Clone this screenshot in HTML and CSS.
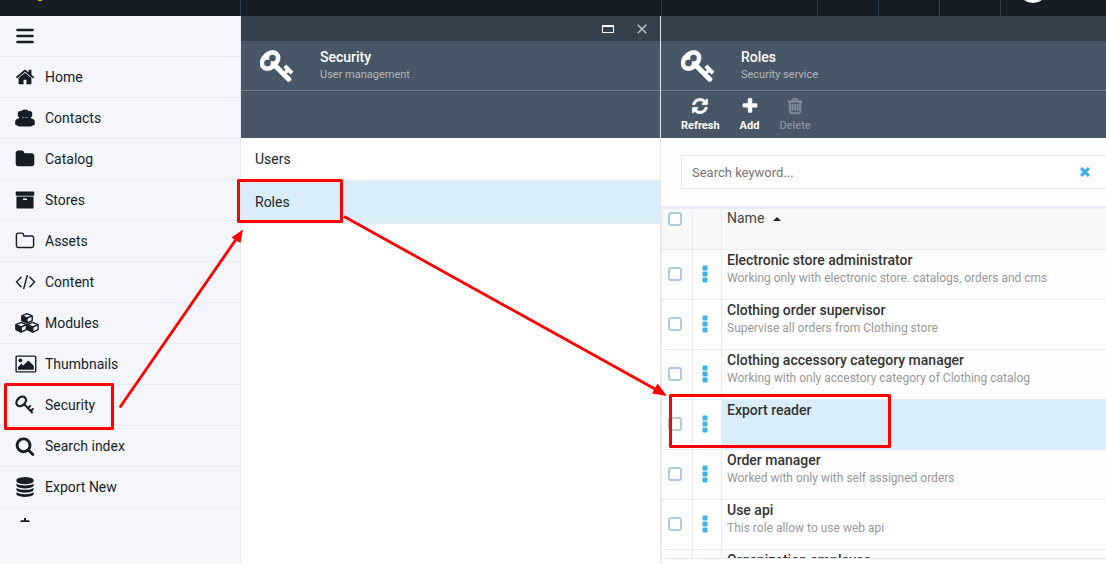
FILE: index.html
```html
<!DOCTYPE html>
<html lang="en">
<head>
<meta charset="utf-8">
<title>Security roles</title>
<link rel="stylesheet" href="styles.css">
</head>
<body>
<svg class="sprite" aria-hidden="true">
  <symbol id="i-home" viewBox="0 0 1792 1792"><path d="M1472 992v480q0 26-19 45t-45 19h-384v-384h-256v384h-384q-26 0-45-19t-19-45v-480q0-1 .5-3t.5-3l575-474 575 474q1 2 1 6zm223-69l-62 74q-8 9-21 11h-3q-13 0-21-7l-692-577-692 577q-12 8-24 7-13-2-21-11l-62-74q-8-10-7-23.5t11-21.5l719-599q32-26 76-26t76 26l244 204v-195q0-14 9-23t23-9h192q14 0 23 9t9 23v408l219 182q10 8 11 21.5t-7 23.5z"/></symbol>
  <symbol id="i-group" viewBox="0 0 20 20"><path d="M10 1.5C12.2 1.5 13.3 2.6 14 3.2C16 2.6 17.6 4.2 17.2 6.2C17.6 7.4 16.8 8.6 15.9 9.4V10.2C18 10.6 19.8 11.5 19.8 14V16C19.8 17.2 18.8 17.4 17.6 17.4C17 18.2 15.8 18.4 14.8 18.4H5.2C4.2 18.4 3 18.2 2.4 17.4C1.2 17.4.2 17.2.2 16V14C.2 11.5 2 10.6 4.1 10.2V9.4C3.2 8.6 2.4 7.4 2.8 6.2C2.4 4.2 4 2.6 6 3.2C6.7 2.6 7.8 1.5 10 1.5Z"/><path d="M7 9.5h6" fill="none" stroke="#8d9299" stroke-width=".8" stroke-dasharray="2.4 .8"/></symbol>
  <symbol id="i-folder" viewBox="0 0 1792 1792"><path d="M1728 608v704q0 92-66 158t-158 66h-1216q-92 0-158-66t-66-158v-960q0-92 66-158t158-66h320q92 0 158 66t66 158v32h672q92 0 158 66t66 158z"/></symbol>
  <symbol id="i-archive" viewBox="0 0 1792 1792"><path d="M1088 832q0-26-19-45t-45-19h-256q-26 0-45 19t-19 45 19 45 45 19h256q26 0 45-19t19-45zm576-192v960q0 26-19 45t-45 19h-1408q-26 0-45-19t-19-45v-960q0-26 19-45t45-19h1408q26 0 45 19t19 45zm64-448v256q0 26-19 45t-45 19h-1536q-26 0-45-19t-19-45v-256q0-26 19-45t45-19h1536q26 0 45 19t19 45z"/></symbol>
  <symbol id="i-folder-o" viewBox="0 0 1792 1792"><path d="M1600 1312v-704q0-40-28-68t-68-28h-704q-40 0-68-28t-28-68v-64q0-40-28-68t-68-28h-320q-40 0-68 28t-28 68v960q0 40 28 68t68 28h1216q40 0 68-28t28-68zm128-704v704q0 92-66 158t-158 66h-1216q-92 0-158-66t-66-158v-960q0-92 66-158t158-66h320q92 0 158 66t66 158v32h672q92 0 158 66t66 158z"/></symbol>
  <symbol id="i-code" viewBox="0 0 22 20"><path d="M6.5 4.8 1.5 10l5 5.2M14.5 4.8l5 5.2-5 5.2M12.4 3 8.6 17" fill="none" stroke="currentColor" stroke-width="1.4"/></symbol>
  <symbol id="i-cubes" viewBox="0 0 24 22"><g stroke="currentColor" stroke-width="1.4" stroke-linejoin="round" fill="#f4f6fb"><path d="M12 1.7 17.2 3.8V8.6L12 11 6.8 8.6V3.8Z"/><path d="M6.2 10.4 11.4 12.6V17.6L6.2 20.2.9 17.6V12.6Z"/><path d="M17.8 10.4 23.1 12.6V17.6L17.8 20.2 12.4 17.6V12.6Z"/><path d="M6.8 3.8 12 6 17.2 3.8M.9 12.6 6.2 15 11.4 12.6M12.4 12.6 17.8 15 23.1 12.6M12 6V11M6.2 15V20M17.8 15V20" fill="none"/></g><path d="M6.8 3.8 12 6V11L6.8 8.6ZM.9 12.6 6.2 15V20.2L.9 17.6ZM12.4 12.6 17.8 15V20.2L12.4 17.6Z"/></symbol>
  <symbol id="i-image" viewBox="0 0 22 20"><rect x="1.1" y="2.1" width="19.6" height="15.8" rx="1" fill="none" stroke="currentColor" stroke-width="1.4"/><circle cx="5.4" cy="6.4" r="1.9"/><path d="M3 15.8V13L6.3 9.8 8.2 11.6 13.3 6.4 18.8 11.8V15.8Z"/></symbol>
  <symbol id="i-key" viewBox="0 0 1792 1792"><path d="M832 512q0-80-56-136t-136-56-136 56-56 136q0 42 19 83-41-19-83-19-80 0-136 56t-56 136 56 136 136 56 136-56 56-136q0-42-19-83 41 19 83 19 80 0 136-56t56-136zm851 704q0 17-49 66t-66 49q-9 0-28.500-16t-36.500-33-38.500-40-24.500-26l-96 96 220 220q28 28 28 68 0 42-39 81t-81 39q-40 0-68-28l-671-671q-176 131-365 131-163 0-265.500-102.500t-102.500-265.500q0-160 95-313t248-248 313-95q163 0 265.500 102.500t102.500 265.500q0 189-131 365l355 355 96-96q-3-3-26-24.500t-40-38.500-33-36.500-16-28.500q0-17 49-66t66-49q13 0 23 10 6 6 46 44.500t82 79.500 86.500 86 73 78 28.500 41z" stroke="currentColor" stroke-width="40"/></symbol>
  <symbol id="i-key-thin" viewBox="0 0 20 20"><g fill="none" stroke="currentColor" stroke-width="2.300"><ellipse cx="6.200" cy="6.400" rx="5.400" ry="4" transform="rotate(-45 6.200 6.400)"/><path d="M9.200 9.200 17.600 18M12.800 13.400 15.800 10.400M15.600 16.200 18.400 13.400" stroke-width="2"/></g></symbol>
  <symbol id="i-search" viewBox="0 0 1792 1792"><path d="M1216 832q0-185-131.500-316.500t-316.500-131.500-316.500 131.500-131.500 316.500 131.500 316.500 316.500 131.500 316.500-131.500 131.500-316.500zm512 832q0 52-38 90t-90 38q-54 0-90-38l-343-342q-179 124-399 124-143 0-273.500-55.500t-225-150-150-225-55.500-273.500 55.500-273.500 150-225 225-150 273.500-55.500 273.500 55.500 225 150 150 225 55.500 273.500q0 220-124 399l343 343q37 37 37 90z"/></symbol>
  <symbol id="i-db" viewBox="0 0 1792 1792"><path d="M896 768q237 0 443-43t325-127v170q0 69-103 128t-280 93.500-385 34.500-385-34.500-280-93.500-103-128v-170q119 84 325 127t443 43zm0 768q237 0 443-43t325-127v170q0 69-103 128t-280 93.500-385 34.500-385-34.500-280-93.500-103-128v-170q119 84 325 127t443 43zm0-384q237 0 443-43t325-127v170q0 69-103 128t-280 93.500-385 34.500-385-34.500-280-93.500-103-128v-170q119 84 325 127t443 43zm0-1152q208 0 385 34.500t280 93.500 103 128v128q0 69-103 128t-280 93.500-385 34.500-385-34.500-280-93.500-103-128v-128q0-69 103-128t280-93.500 385-34.500z"/></symbol>
  <symbol id="i-more" viewBox="0 0 20 20"><path d="M9 0H11V2.200H14L15 4H5L6 2.200H9Z"/></symbol>
  <symbol id="i-refresh" viewBox="0 0 1792 1792"><path d="M1639 1056q0 5-1 7-64 268-268 434.500t-478 166.500q-146 0-282.500-55t-243.500-157l-129 129q-19 19-45 19t-45-19-19-45v-448q0-26 19-45t45-19h448q26 0 45 19t19 45-19 45l-137 137q71 66 161 102t187 36q134 0 250-65t186-179q11-17 53-117 8-23 30-23h192q13 0 22.500 9.500t9.500 22.500zm25-800v448q0 26-19 45t-45 19h-448q-26 0-45-19t-19-45 19-45l138-138q-148-137-349-137-134 0-250 65t-186 179q-11 17-53 117-8 23-30 23h-199q-13 0-22.500-9.500t-9.500-22.500v-7q65-268 270-434.500t480-166.500q146 0 284 55.500t245 156.500l130-129q19-19 45-19t45 19 19 45z" stroke="currentColor" stroke-width="50"/></symbol>
  <symbol id="i-plus" viewBox="0 0 1792 1792"><path d="M1600 736v192q0 40-28 68t-68 28h-416v416q0 40-28 68t-68 28h-192q-40 0-68-28t-28-68v-416h-416q-40 0-68-28t-28-68v-192q0-40 28-68t68-28h416v-416q0-40 28-68t68-28h192q40 0 68 28t28 68v416h416q40 0 68 28t28 68z" stroke="currentColor" stroke-width="50"/></symbol>
  <symbol id="i-trash" viewBox="0 0 1792 1792"><path d="M704 736v576q0 14-9 23t-23 9h-64q-14 0-23-9t-9-23v-576q0-14 9-23t23-9h64q14 0 23 9t9 23zm256 0v576q0 14-9 23t-23 9h-64q-14 0-23-9t-9-23v-576q0-14 9-23t23-9h64q14 0 23 9t9 23zm256 0v576q0 14-9 23t-23 9h-64q-14 0-23-9t-9-23v-576q0-14 9-23t23-9h64q14 0 23 9t9 23zm128 724v-948h-896v948q0 22 7 40.500t14.500 27 10.500 8.500h832q3 0 10.500-8.500t14.500-27 7-40.500zm-672-1076h448l-48-117q-7-9-17-11h-317q-10 2-17 11zm928 32v64q0 14-9 23t-23 9h-96v948q0 83-47 143.500t-113 60.500h-832q-66 0-113-58.500t-47-141.500v-952h-96q-14 0-23-9t-9-23v-64q0-14 9-23t23-9h309l70-167q15-37 54-63t79-26h320q40 0 79 26t54 63l70 167h309q14 0 23 9t9 23z" stroke="currentColor" stroke-width="60"/></symbol>
  <symbol id="i-dots" viewBox="0 0 6 18"><rect x="0.500" y="0.500" width="5" height="5" rx="1"/><rect x="0.500" y="6.500" width="5" height="5" rx="1"/><rect x="0.500" y="12.500" width="5" height="5" rx="1"/></symbol>
</svg>

<header class="topbar">
  <div class="topbar-logo"><svg width="4" height="1"><rect width="4" height="1" fill="#c9a227"/></svg></div>
  <div class="topbar-title"></div>
  <div class="topbar-search"></div>
  <div class="topbar-cell"></div>
  <div class="topbar-cell"></div>
  <div class="topbar-cell"></div>
  <div class="topbar-user"><svg width="24" height="3" viewBox="0 21 24 3"><circle cx="12" cy="9" r="15" fill="#fff"/></svg></div>
</header>

<div class="workspace">
  <aside class="sidebar">
    <nav class="menu">
      <button class="menu-item" aria-label="Toggle menu"><svg class="icon" viewBox="0 0 20 20"><path d="M2.500 4H17.500M2.500 10H17.500M2.500 16H17.500" stroke="currentColor" stroke-width="2.600" stroke-linecap="round"/></svg></button>
      <a class="menu-item" href="#"><svg class="icon"><use href="#i-home"/></svg>Home</a>
      <a class="menu-item" href="#"><svg class="icon"><use href="#i-group"/></svg>Contacts</a>
      <a class="menu-item" href="#"><svg class="icon"><use href="#i-folder"/></svg>Catalog</a>
      <a class="menu-item" href="#"><svg class="icon"><use href="#i-archive"/></svg>Stores</a>
      <a class="menu-item" href="#"><svg class="icon"><use href="#i-folder-o"/></svg>Assets</a>
      <a class="menu-item" href="#"><svg class="icon icon-wide"><use href="#i-code"/></svg>Content</a>
      <a class="menu-item" href="#"><svg class="icon icon-cubes"><use href="#i-cubes"/></svg>Modules</a>
      <a class="menu-item" href="#"><svg class="icon icon-wide"><use href="#i-image"/></svg>Thumbnails</a>
      <a class="menu-item" href="#"><svg class="icon"><use href="#i-key-thin"/></svg>Security</a>
      <a class="menu-item" href="#"><svg class="icon"><use href="#i-search"/></svg>Search index</a>
      <a class="menu-item" href="#"><svg class="icon"><use href="#i-db"/></svg>Export New</a>
      <a class="menu-item" href="#" aria-label="More"><svg class="icon"><use href="#i-more"/></svg></a>
    </nav>
  </aside>

  <section class="blade blade-security">
    <div class="blade-controls">
      <button class="control" aria-label="Maximize"><svg width="12" height="8"><path d="M0 0H12V8H0ZM1 2V7H11V2Z" fill="#fff" fill-rule="evenodd"/></svg></button>
      <button class="control" aria-label="Close"><svg width="10" height="10"><path d="M.7.700 9.300 9.300M9.300.700.700 9.300" stroke="#b5bac0" stroke-width="1.600"/></svg></button>
    </div>
    <div class="blade-head">
      <svg class="blade-icon"><use href="#i-key"/></svg>
      <div><h2 class="blade-title">Security</h2><p class="blade-sub">User management</p></div>
    </div>
    <div class="toolbar"></div>
    <ul class="list">
      <li><a class="list-item" href="#">Users</a></li>
      <li><a class="list-item selected" href="#">Roles</a></li>
    </ul>
  </section>

  <section class="blade blade-roles">
    <div class="blade-controls"></div>
    <div class="blade-head">
      <svg class="blade-icon"><use href="#i-key"/></svg>
      <div><h2 class="blade-title">Roles</h2><p class="blade-sub">Security service</p></div>
    </div>
    <div class="toolbar">
      <button class="tool"><svg class="tool-icon"><use href="#i-refresh"/></svg>Refresh</button>
      <button class="tool"><svg class="tool-icon"><use href="#i-plus"/></svg>Add</button>
      <button class="tool" disabled><svg class="tool-icon"><use href="#i-trash"/></svg>Delete</button>
    </div>
    <div class="search">
      <div class="search-box">
        <input class="search-input" type="text" placeholder="Search keyword..." aria-label="Search keyword">
        <button class="search-clear" aria-label="Clear"><svg width="10" height="10"><path d="M2.200 2.200 7.800 7.800M7.800 2.200 2.200 7.800" stroke="#43b0e6" stroke-width="3.200" stroke-linecap="square"/></svg></button>
      </div>
    </div>
    <div class="grid">
      <table class="table">
        <colgroup><col class="col-check"><col class="col-menu"><col></colgroup>
        <thead>
          <tr><th class="cell-check"><input class="check" type="checkbox" aria-label="Select all"></th><th></th><th class="cell-name">Name<svg class="sort" width="8" height="4"><path d="M0 4 4 0 8 4Z"/></svg></th></tr>
        </thead>
        <tbody>
          <tr><td class="cell-check"><input class="check" type="checkbox" aria-label="Electronic store administrator"></td><td class="cell-menu"><button class="dots" aria-label="Actions"><svg width="6" height="18"><use href="#i-dots"/></svg></button></td><td class="cell-name"><div class="name">Electronic store administrator</div><div class="desc">Working only with electronic store. catalogs, orders and cms</div></td></tr>
          <tr><td class="cell-check"><input class="check" type="checkbox" aria-label="Clothing order supervisor"></td><td class="cell-menu"><button class="dots" aria-label="Actions"><svg width="6" height="18"><use href="#i-dots"/></svg></button></td><td class="cell-name"><div class="name">Clothing order supervisor</div><div class="desc">Supervise all orders from Clothing store</div></td></tr>
          <tr><td class="cell-check"><input class="check" type="checkbox" aria-label="Clothing accessory category manager"></td><td class="cell-menu"><button class="dots" aria-label="Actions"><svg width="6" height="18"><use href="#i-dots"/></svg></button></td><td class="cell-name"><div class="name">Clothing accessory category manager</div><div class="desc">Working with only accestory category of Clothing catalog</div></td></tr>
          <tr class="active"><td class="cell-check"><input class="check" type="checkbox" aria-label="Export reader"></td><td class="cell-menu"><button class="dots" aria-label="Actions"><svg width="6" height="18"><use href="#i-dots"/></svg></button></td><td class="cell-name"><div class="name">Export reader</div></td></tr>
          <tr><td class="cell-check"><input class="check" type="checkbox" aria-label="Order manager"></td><td class="cell-menu"><button class="dots" aria-label="Actions"><svg width="6" height="18"><use href="#i-dots"/></svg></button></td><td class="cell-name"><div class="name">Order manager</div><div class="desc">Worked with only with self assigned orders</div></td></tr>
          <tr><td class="cell-check"><input class="check" type="checkbox" aria-label="Use api"></td><td class="cell-menu"><button class="dots" aria-label="Actions"><svg width="6" height="18"><use href="#i-dots"/></svg></button></td><td class="cell-name"><div class="name">Use api</div><div class="desc">This role allow to use web api</div></td></tr>
          <tr><td class="cell-check"></td><td class="cell-menu"></td><td class="cell-name"><div class="name">Organization employee</div></td></tr>
        </tbody>
      </table>
    </div>
  </section>
</div>

<svg class="annotations" width="1106" height="564" aria-hidden="true">
  <g fill="none" stroke="#f00" stroke-width="3" stroke-linejoin="round">
    <rect x="5.500" y="384.500" width="107" height="44"/>
    <rect x="238.500" y="180.500" width="103" height="41"/>
    <rect x="670.500" y="395.500" width="219" height="51"/>
    <path d="M120.500 406.500 237 238M345 217 655 389" stroke-linecap="round" stroke-width="2.800"/>
  </g>
  <path d="M243 229.500 240.500 243 231.500 237.500ZM667 396 652 393.500 657.500 383.500Z" fill="#f00"/>
</svg>
</body>
</html>
```

FILE: styles.css
```css
* { box-sizing: border-box; }

body {
  margin: 0;
  height: 100vh;
  display: flex;
  flex-direction: column;
  overflow: hidden;
  background: #fff;
  color: #23282e;
  font-family: Roboto, "Liberation Sans", sans-serif;
  font-size: 14px;
}

button {
  border: 0;
  padding: 0;
  background: none;
  color: inherit;
  font: inherit;
}

a { color: inherit; text-decoration: none; }
svg { display: block; fill: currentColor; }
.sprite { position: absolute; width: 0; height: 0; }

/* Top bar */
.topbar {
  flex: none;
  display: flex;
  height: 16px;
  background: #161d25;
}
.topbar > div { border-right: 1px solid #2d3b4b; }
.topbar-logo { width: 241px; padding-left: 38px; }
.topbar-title { width: 421px; }
.topbar-search { flex: 1; }
.topbar-cell { width: 61px; }
.topbar > .topbar-user { width: 105px; padding-left: 20px; border-right: 0; }

.workspace { flex: 1; display: flex; min-height: 0; }

/* Sidebar */
.sidebar {
  flex: none;
  display: flex;
  width: 241px;
  padding-bottom: 42px;
  background: #f4f6fb;
  border-right: 1px solid #e6e9f2;
}
.menu { flex: 1; overflow: hidden; }
.menu-item {
  display: flex;
  align-items: center;
  gap: 10px;
  width: 100%;
  height: 41px;
  padding-left: 15px;
  border-bottom: 1px solid #e8ebf1;
  color: #161d25;
}
.icon { flex: none; width: 20px; height: 20px; overflow: visible; }
.icon-wide { width: 22px; margin-right: -2px; }
.icon-cubes { width: 24px; height: 22px; margin-right: -4px; }

/* Blades */
.blade { display: flex; flex-direction: column; min-width: 0; }
.blade-security { flex: none; width: 420px; border-right: 1px solid #e6e9f2; }
.blade-roles { flex: 1; }
.blade-controls {
  flex: none;
  display: flex;
  align-items: center;
  justify-content: flex-end;
  gap: 23px;
  height: 25px;
  padding-right: 13px;
  background: #36414e;
}
.blade-head {
  flex: none;
  display: flex;
  align-items: center;
  gap: 25px;
  height: 50px;
  padding-left: 19px;
  background: #475767;
  border-bottom: 1px solid #6c7b8a;
}
.blade-icon { width: 35px; height: 35px; color: #fff; overflow: visible; }
.blade-title {
  margin: 0;
  color: #fff;
  font-size: 14px;
  font-weight: 500;
  line-height: 18px;
}
.blade-roles .blade-head { padding-left: 20px; }
.blade-sub { margin: 0; color: #b0b5ba; font-size: 11px; line-height: 17px; }
.toolbar {
  flex: none;
  display: flex;
  gap: 20px;
  height: 47px;
  padding: 6px 20px 0;
  background: #475767;
}
.tool {
  display: flex;
  flex-direction: column;
  align-items: center;
  gap: 4px;
  height: 36px;
  color: #fff;
  font-size: 11px;
  font-weight: 700;
  line-height: 14px;
}
.tool:disabled { color: #84909c; font-weight: 500; }
.tool-icon { width: 18px; height: 18px; }

.list { margin: 0; padding: 0; list-style: none; }
.list-item {
  display: block;
  height: 43px;
  padding-left: 14px;
  border-bottom: 1px solid #e8ebf1;
  line-height: 42px;
}
.selected { background: #d9eef9; }

/* Search */
.search {
  flex: none;
  padding: 17px 0 17px 20px;
  background: #fcfdff;
  border-bottom: 3px solid #e9ecf4;
}
.search-box {
  display: flex;
  align-items: center;
  height: 34px;
  padding-right: 16px;
  background: #fff;
  border: 1px solid #e6e9f2;
  border-right: 0;
}
.search-input {
  flex: 1;
  min-width: 0;
  padding: 0 10px;
  border: 0;
  outline: 0;
  background: none;
  font: 13px Roboto, "Liberation Sans", sans-serif;
}
.search-input::placeholder { color: #757575; }

/* Roles grid */
.grid {
  flex: 1;
  min-height: 0;
  margin-bottom: 5px;
  overflow: hidden;
  border-left: 1px solid #e6e9f2;
  border-bottom: 1px solid #e6e9f2;
}
.table {
  width: 100%;
  border-collapse: separate;
  border-spacing: 0;
  table-layout: fixed;
}
.col-check { width: 31px; }
.col-menu { width: 29px; }
th, td {
  height: 50px;
  padding: 0;
  border-right: 1px solid #e8ebf1;
  border-bottom: 1px solid #e8ebf1;
  text-align: left;
  vertical-align: top;
}
th { height: 41px; background: #f8f8f8; font-weight: 400; }
tbody tr:nth-child(odd) td { background: #fdfdfd; }
th:last-child, td:last-child { border-right: 0; }
tbody .active td.cell-name { background: #d9eef9; }
td.cell-check { padding: 17px 0 0 6px; }
th.cell-check { padding: 3px 0 0 6px; }
.cell-menu { padding: 15px 0 0 9px; color: #43b0e6; }
.dots { display: block; }
.cell-name { padding-left: 5px; }
th.cell-name { color: #444; line-height: 19px; }
.check {
  appearance: none;
  display: block;
  width: 14px;
  height: 14px;
  margin: 0;
  border: 2px solid #b0cade;
  border-radius: 3px;
  background: #fff;
}
.sort { display: inline-block; margin-left: 9px; vertical-align: 2px; color: #222; }
.name { color: #333; font-weight: 500; line-height: 20px; }
.desc { color: #999; font-size: 12px; line-height: 16px; }

/* Red boxes and arrows drawn over the interface */
.annotations { position: absolute; top: 0; left: 0; pointer-events: none; }
```
